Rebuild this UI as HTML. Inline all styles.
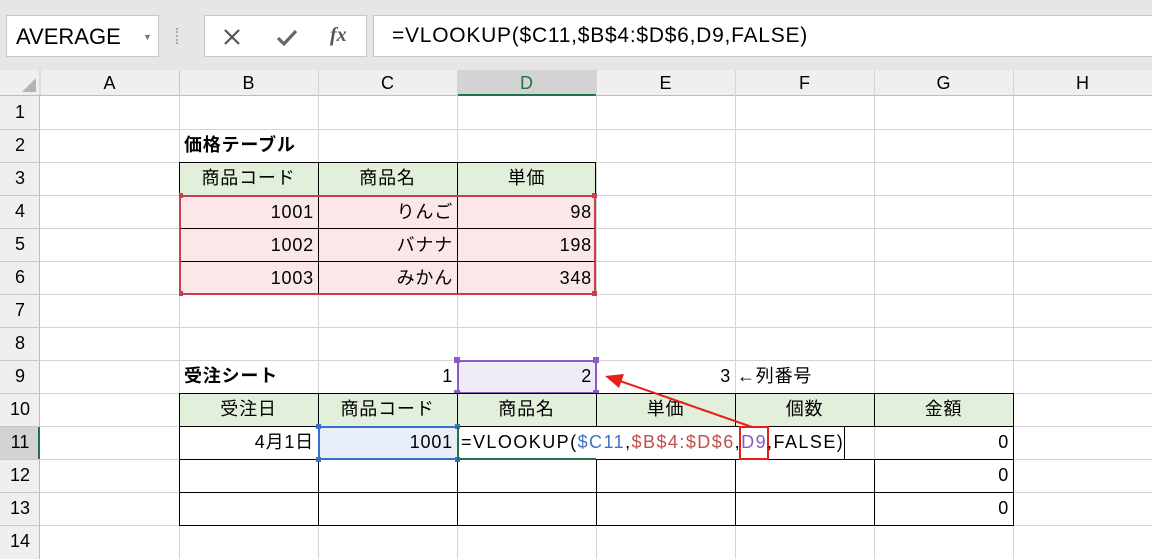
<!DOCTYPE html>
<html><head><meta charset="utf-8"><style>
body{margin:0;width:1152px;height:559px;overflow:hidden;background:#fff;font-family:"Liberation Sans","Noto Sans CJK JP",sans-serif;position:relative}
.a{position:absolute;box-sizing:border-box}
.c{position:absolute;box-sizing:border-box;font-size:18px;line-height:33px;height:33px;padding:0 4px;white-space:nowrap;color:#000;letter-spacing:0.8px}
.r{text-align:right}.m{text-align:center}
.g{background:#e2efda}
.p{background:#fbe7e7}
.hd{position:absolute;box-sizing:border-box;font-size:18px;text-align:center;color:#000}
</style></head><body>
<div class="a" style="left:0;top:0;width:1152px;height:70px;background:#e6e6e6"></div>
<div class="a" style="left:6px;top:15px;width:153px;height:42px;background:#fff;border:1px solid #c6c6c6;font-size:22px;line-height:42px;padding-left:9px">AVERAGE<span style="position:absolute;left:136px;top:0;font-size:9px;color:#777">▼</span></div>
<div class="a" style="left:176px;top:28px;width:3px;height:16px;border-left:2px dotted #aaa"></div>
<div class="a" style="left:204px;top:15px;width:163px;height:42px;background:#fff;border:1px solid #c6c6c6"></div>
<svg class="a" style="left:222px;top:27px" width="20" height="20"><path d="M3 3L17 17M17 3L3 17" stroke="#555" stroke-width="2.2"/></svg>
<svg class="a" style="left:275px;top:27px" width="24" height="20"><path d="M3 11L9 17L21 4" stroke="#666" stroke-width="3.2" fill="none"/></svg>
<div class="a" style="left:330px;top:24px;font-family:'Liberation Serif',serif;font-style:italic;font-weight:bold;font-size:20px;color:#555">fx</div>
<div class="a" style="left:373px;top:15px;width:800px;height:42px;background:#fff;border:1px solid #c6c6c6;font-size:21px;line-height:40px;padding-left:18px;letter-spacing:0.75px">=VLOOKUP($C11,$B$4:$D$6,D9,FALSE)</div>
<div class="a" style="left:0;top:70px;width:1152px;height:26px;background:#efefef;border-bottom:1px solid #bdbdbd"></div>
<div class="a" style="left:0;top:96px;width:40px;height:463px;background:#efefef;border-right:1px solid #bdbdbd"></div>
<svg class="a" style="left:20px;top:76px" width="18" height="18"><path d="M16 2L16 16L2 16Z" fill="#b4b4b4"/></svg>
<div class="a" style="left:457px;top:70px;width:139px;height:26px;background:#d3d3d3;border-bottom:2px solid #217346"></div>
<div class="a" style="left:0;top:426px;width:40px;height:33px;background:#d3d3d3;border-right:2px solid #217346"></div>
<svg class="a" style="left:0;top:70px" width="1152" height="489">
<g stroke="#d4d4d4" stroke-width="1">
<line x1="179.5" y1="0" x2="179.5" y2="489"/><line x1="318.5" y1="0" x2="318.5" y2="489"/><line x1="457.5" y1="0" x2="457.5" y2="489"/><line x1="596.5" y1="0" x2="596.5" y2="489"/><line x1="735.5" y1="0" x2="735.5" y2="489"/><line x1="874.5" y1="0" x2="874.5" y2="489"/><line x1="1013.5" y1="0" x2="1013.5" y2="489"/>
<line x1="40" y1="59.5" x2="1152" y2="59.5"/><line x1="40" y1="92.5" x2="1152" y2="92.5"/><line x1="40" y1="125.5" x2="1152" y2="125.5"/><line x1="40" y1="158.5" x2="1152" y2="158.5"/><line x1="40" y1="191.5" x2="1152" y2="191.5"/><line x1="40" y1="224.5" x2="1152" y2="224.5"/><line x1="40" y1="257.5" x2="1152" y2="257.5"/><line x1="40" y1="290.5" x2="1152" y2="290.5"/><line x1="40" y1="323.5" x2="1152" y2="323.5"/><line x1="40" y1="356.5" x2="1152" y2="356.5"/><line x1="40" y1="389.5" x2="1152" y2="389.5"/><line x1="40" y1="422.5" x2="1152" y2="422.5"/><line x1="40" y1="455.5" x2="1152" y2="455.5"/>
</g>
<g stroke="#c8c8c8"><line x1="40" y1="0" x2="40" y2="26"/><line x1="179.5" y1="0" x2="179.5" y2="26"/></g>
<g stroke="#c8c8c8"><line x1="0" y1="59.5" x2="40" y2="59.5"/><line x1="0" y1="92.5" x2="40" y2="92.5"/><line x1="0" y1="125.5" x2="40" y2="125.5"/><line x1="0" y1="158.5" x2="40" y2="158.5"/><line x1="0" y1="191.5" x2="40" y2="191.5"/><line x1="0" y1="224.5" x2="40" y2="224.5"/><line x1="0" y1="257.5" x2="40" y2="257.5"/><line x1="0" y1="290.5" x2="40" y2="290.5"/><line x1="0" y1="323.5" x2="40" y2="323.5"/><line x1="0" y1="356.5" x2="40" y2="356.5"/><line x1="0" y1="389.5" x2="40" y2="389.5"/><line x1="0" y1="422.5" x2="40" y2="422.5"/><line x1="0" y1="455.5" x2="40" y2="455.5"/></g>
</svg>
<div class="hd" style="left:40px;top:73px;width:139px">A</div><div class="hd" style="left:179px;top:73px;width:139px">B</div><div class="hd" style="left:318px;top:73px;width:139px">C</div><div class="hd" style="left:457px;top:73px;width:139px;color:#217346">D</div><div class="hd" style="left:596px;top:73px;width:139px">E</div><div class="hd" style="left:735px;top:73px;width:139px">F</div><div class="hd" style="left:874px;top:73px;width:139px">G</div><div class="hd" style="left:1013px;top:73px;width:139px">H</div>
<div class="hd" style="left:0;width:40px;top:102px">1</div><div class="hd" style="left:0;width:40px;top:135px">2</div><div class="hd" style="left:0;width:40px;top:168px">3</div><div class="hd" style="left:0;width:40px;top:201px">4</div><div class="hd" style="left:0;width:40px;top:234px">5</div><div class="hd" style="left:0;width:40px;top:267px">6</div><div class="hd" style="left:0;width:40px;top:300px">7</div><div class="hd" style="left:0;width:40px;top:333px">8</div><div class="hd" style="left:0;width:40px;top:366px">9</div><div class="hd" style="left:0;width:40px;top:399px">10</div><div class="hd" style="left:0;width:40px;top:432px">11</div><div class="hd" style="left:0;width:40px;top:465px">12</div><div class="hd" style="left:0;width:40px;top:498px">13</div><div class="hd" style="left:0;width:40px;top:531px">14</div>
<div class="c" style="left:180px;top:129px;font-weight:bold">価格テーブル</div>
<div class="c g m" style="left:179px;top:162px;width:417px;height:34px;border:1px solid #000"></div>
<div class="c m" style="left:179px;top:162px;width:139px">商品コード</div><div class="c m" style="left:318px;top:162px;width:139px">商品名</div><div class="c m" style="left:457px;top:162px;width:139px">単価</div>
<div class="a p" style="left:179px;top:195px;width:417px;height:99px"></div>
<svg class="a" style="left:179px;top:162px" width="420" height="136"><g stroke="#000"><line x1="139.5" y1="0" x2="139.5" y2="132"/><line x1="278.5" y1="0" x2="278.5" y2="132"/><line x1="0" y1="66.5" x2="417" y2="66.5"/><line x1="0" y1="99.5" x2="417" y2="99.5"/></g>
<rect x="1" y="34" width="415" height="98" fill="none" stroke="#c3404c" stroke-width="2"/>
<g fill="#c3404c"><rect x="-1" y="31" width="5" height="5"/><rect x="413" y="31" width="5" height="5"/><rect x="-1" y="129" width="5" height="5"/><rect x="413" y="129" width="5" height="5"/></g></svg>
<div class="c r" style="left:179px;top:196px;width:139px">1001</div><div class="c r" style="left:318px;top:196px;width:139px">りんご</div><div class="c r" style="left:457px;top:196px;width:139px">98</div>
<div class="c r" style="left:179px;top:229px;width:139px">1002</div><div class="c r" style="left:318px;top:229px;width:139px">バナナ</div><div class="c r" style="left:457px;top:229px;width:139px">198</div>
<div class="c r" style="left:179px;top:262px;width:139px">1003</div><div class="c r" style="left:318px;top:262px;width:139px">みかん</div><div class="c r" style="left:457px;top:262px;width:139px">348</div>
<div class="c" style="left:180px;top:360px;font-weight:bold">受注シート</div>
<div class="c r" style="left:318px;top:360px;width:139px">1</div>
<div class="a" style="left:457px;top:360px;width:140px;height:34px;background:#efebf7;border:2px solid #8a5cc0"></div>
<svg class="a" style="left:453px;top:356px" width="148" height="42"><g fill="#8a5cc0"><rect x="1" y="1" width="6" height="6"/><rect x="140" y="1" width="6" height="6"/><rect x="1" y="34" width="6" height="6"/><rect x="140" y="34" width="6" height="6"/></g></svg>
<div class="c r" style="left:457px;top:360px;width:139px">2</div>
<div class="c r" style="left:596px;top:360px;width:139px">3</div>
<div class="c" style="left:735px;top:360px;padding-left:2px">←列番号</div>
<div class="a g" style="left:179px;top:393px;width:834px;height:33px"></div>
<div class="c m" style="left:179px;top:393px;width:139px">受注日</div><div class="c m" style="left:318px;top:393px;width:139px">商品コード</div><div class="c m" style="left:457px;top:393px;width:139px">商品名</div><div class="c m" style="left:596px;top:393px;width:139px">単価</div><div class="c m" style="left:735px;top:393px;width:139px">個数</div><div class="c m" style="left:874px;top:393px;width:139px">金額</div>
<div class="a" style="left:318px;top:426px;width:139px;height:33px;background:#e8eef9"></div>
<div class="a" style="left:457px;top:427px;width:388px;height:32px;background:#fff"></div>
<svg class="a" style="left:177px;top:391px" width="840" height="137"><g stroke="#000"><rect x="2.5" y="2.5" width="834" height="132" fill="none"/>
<line x1="2" y1="35.5" x2="837" y2="35.5"/><line x1="2" y1="68.5" x2="837" y2="68.5"/><line x1="2" y1="101.5" x2="837" y2="101.5"/>
<line x1="141.5" y1="2" x2="141.5" y2="135"/><line x1="280.5" y1="2" x2="280.5" y2="35"/><line x1="280.5" y1="68" x2="280.5" y2="135"/><line x1="419.5" y1="2" x2="419.5" y2="35"/><line x1="419.5" y1="68" x2="419.5" y2="135"/><line x1="558.5" y1="2" x2="558.5" y2="35"/><line x1="558.5" y1="68" x2="558.5" y2="135"/><line x1="697.5" y1="2" x2="697.5" y2="35"/><line x1="697.5" y1="68" x2="697.5" y2="135"/><line x1="667.5" y1="36" x2="667.5" y2="68"/></g>
<rect x="142" y="36" width="139" height="32" fill="none" stroke="#3a6fd0" stroke-width="2"/>
<g fill="#3a6fd0"><rect x="139" y="33" width="5" height="5"/><rect x="278" y="33" width="5" height="5"/><rect x="139" y="66" width="5" height="5"/><rect x="278" y="66" width="5" height="5"/></g>
<line x1="281" y1="68" x2="419" y2="68" stroke="#217346" stroke-width="2"/>
<rect x="280" y="35" width="2" height="34" fill="#217346"/>
<rect x="563" y="36" width="28" height="32" fill="none" stroke="#e0201a" stroke-width="2"/>
</svg>
<div class="c r" style="left:179px;top:426px;width:139px">4月1日</div>
<div class="c r" style="left:318px;top:426px;width:139px">1001</div>
<div class="c" style="left:458px;top:426px;padding-left:3px;letter-spacing:1.45px">=VLOOKUP(<span style="color:#4472c4">$C11</span>,<span style="color:#c0504d">$B$4:$D$6</span>,<span style="color:#8a5cc0">D9</span>,FALSE)</div>
<div class="c r" style="left:874px;top:426px;width:139px">0</div><div class="c r" style="left:874px;top:459px;width:139px">0</div><div class="c r" style="left:874px;top:492px;width:139px">0</div>
<svg class="a" style="left:0;top:0" width="1152" height="559"><line x1="752" y1="427" x2="620" y2="381" stroke="#e8201a" stroke-width="2"/><path d="M605 376L624 374L619 388Z" fill="#e8201a"/></svg>
</body></html>
